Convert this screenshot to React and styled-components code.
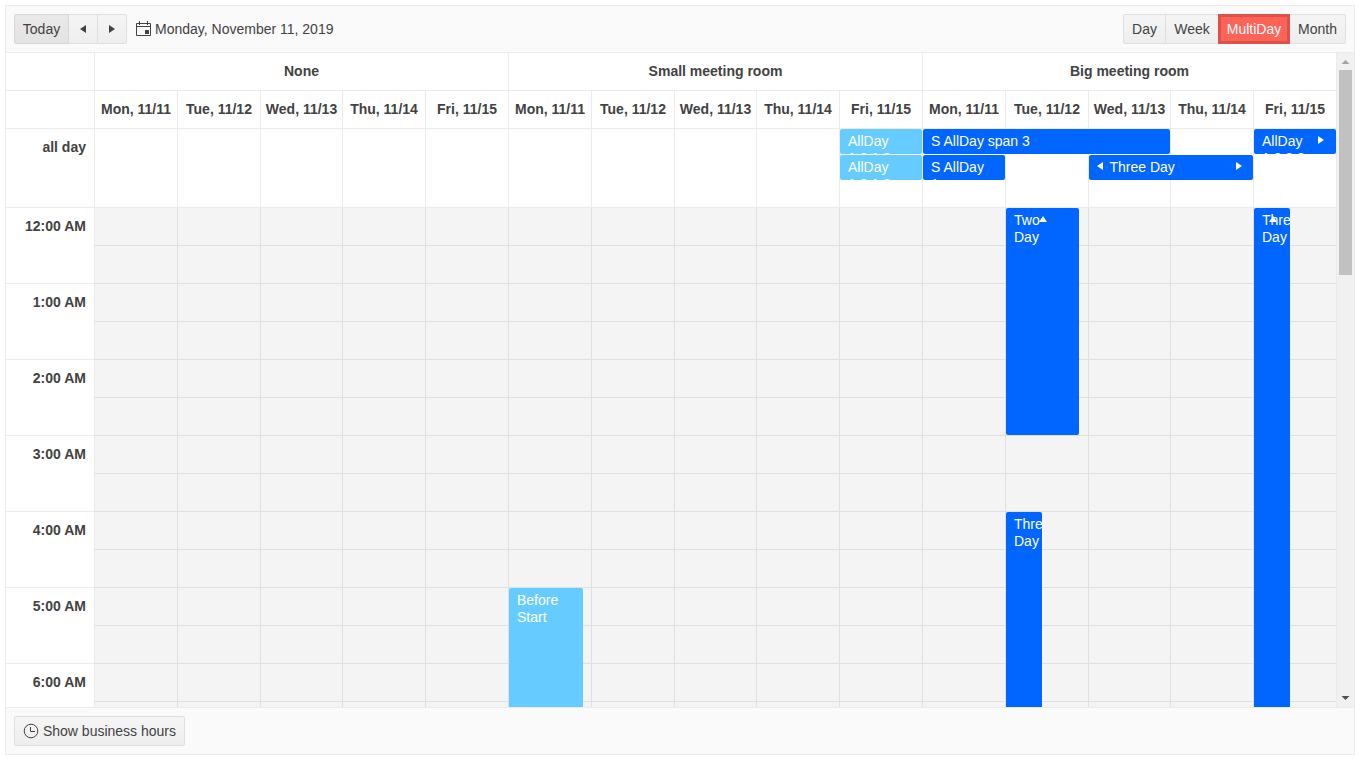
import React from "react";
import styled, { createGlobalStyle, css } from "styled-components";

const Global = createGlobalStyle`
  *, *::before, *::after { box-sizing: border-box; }
  body {
    margin: 0;
    background: #fff;
    color: #424242;
    font: 14px/20px "Liberation Sans", Arial, sans-serif;
  }
`;

const LINE = "#ebebeb";
const SLOT_LINE = "#e0e0e0";
const DAY_COLUMNS = "repeat(3, 83px 83px 82px 83px 83px)";

const Scheduler = styled.div`
  display: flex;
  flex-direction: column;
  width: 1350px;
  height: 750px;
  margin: 5px;
  border: 1px solid ${LINE};
`;

const Toolbar = styled.header`
  display: flex;
  align-items: center;
  height: 47px;
  flex: none;
  padding: 0 8px;
  background: #fafafa;
  border-bottom: 1px solid ${LINE};
`;

const Footer = styled.footer`
  display: flex;
  align-items: center;
  height: 47px;
  flex: none;
  padding: 0 8px;
  background: #fafafa;
  border-top: 1px solid ${LINE};
`;

const ButtonGroup = styled.div`
  display: flex;
`;

const Button = styled.button`
  display: flex;
  align-items: center;
  justify-content: center;
  width: ${(p) => p.$width}px;
  height: 30px;
  padding: 0;
  border: 1px solid #dfdfdf;
  background: linear-gradient(#f5f5f5, #eeeeee);
  color: #424242;
  font: inherit;
  white-space: nowrap;
  & + & { margin-left: -1px; }
  &:first-child { border-radius: 2px 0 0 2px; }
  &:last-child { border-radius: 0 2px 2px 0; }
  &:only-child { border-radius: 2px; }
  ${(p) => p.$pressed && css`
    background: linear-gradient(#e9e9e9, #e3e3e3);
    border-color: #d6d6d6;
    z-index: 1;
  `}
  ${(p) => p.$selected && css`
    background: #ff6358;
    border: 3px solid #d9534a;
    color: #fff;
    z-index: 1;
  `}
`;

const CurrentDate = styled.div`
  display: flex;
  align-items: center;
  gap: 4px;
  margin: 0 auto 0 9px;
`;

const Viewport = styled.div`
  display: flex;
  flex: 1;
  min-height: 0;
`;

const Table = styled.div`
  display: flex;
  flex-direction: column;
  width: 1330px;
  overflow: hidden;
`;

const Row = styled.div`
  display: flex;
  flex: none;
  height: ${(p) => p.$height}px;
`;

const TimeCell = styled.div`
  flex: none;
  width: 88px;
  height: ${(p) => p.$height}px;
  padding: 8px;
  border-bottom: 1px solid ${LINE};
  text-align: right;
  font-weight: 700;
`;

const Days = styled.div`
  display: grid;
  grid-template-columns: ${DAY_COLUMNS};
  grid-auto-rows: ${(p) => p.$rowHeight}px;
  position: relative;
`;

const HeaderCell = styled.div`
  grid-column: span ${(p) => p.$span || 1};
  padding-top: 8px;
  border-left: 1px solid ${LINE};
  border-bottom: 1px solid ${LINE};
  text-align: center;
  font-weight: 700;
  white-space: nowrap;
`;

const SlotCell = styled.div`
  background: #f4f4f4;
  border-left: 1px solid ${SLOT_LINE};
  border-bottom: 1px solid ${SLOT_LINE};
  &:nth-child(15n + 1) { border-left-color: ${LINE}; }
`;

const EventLayer = styled.div`
  position: absolute;
  inset: 0;
`;

const Event = styled.div`
  position: absolute;
  left: ${(p) => p.$left}px;
  top: ${(p) => p.$top}px;
  width: ${(p) => p.$width}px;
  height: ${(p) => p.$height}px;
  padding: 4px 8px;
  padding-left: ${(p) => (p.$indent ? 20.5 : 8)}px;
  overflow: hidden;
  border-radius: 2px;
  background: ${(p) => (p.$light ? "#66ccff" : "#0066ff")};
  color: #fff;
  line-height: 17px;
  white-space: pre-line;
`;

const Marker = styled.svg`
  position: absolute;
  left: ${(p) => p.$x}px;
  top: ${(p) => p.$y}px;
  fill: currentColor;
`;

const Scrollbar = styled.div`
  display: flex;
  flex-direction: column;
  align-items: center;
  width: 18px;
  background: #f1f1f1;
  border-left: 1px solid ${LINE};
`;

const ScrollArrow = styled.svg`
  display: block;
  flex: none;
  fill: ${(p) => (p.$active ? "#505050" : "#a3a3a3")};
`;

const ScrollTrack = styled.div`
  flex: 1;
  width: 13px;
`;

const ScrollThumb = styled.div`
  height: 205px;
  background: #c1c1c1;
`;

const ROOMS = ["None", "Small meeting room", "Big meeting room"];
const DATES = ["Mon, 11/11", "Tue, 11/12", "Wed, 11/13", "Thu, 11/14", "Fri, 11/15"];
const HOURS = ["12:00 AM", "1:00 AM", "2:00 AM", "3:00 AM", "4:00 AM", "5:00 AM", "6:00 AM"];
const SHAPES = {
  left: "M6 0v8L0 4z",
  right: "M0 0v8l6-4z",
  up: "M0 6h8L4 0z",
};

const ALL_DAY = [
  { text: "AllDay\n1.2.1.2", x: 746, y: 0, w: 82, light: true },
  { text: "AllDay\n1.2.1.2", x: 746, y: 26, w: 82, light: true },
  { text: "S AllDay span 3", x: 829, y: 0, w: 247 },
  { text: "S AllDay\n1", x: 829, y: 26, w: 82 },
  { text: "Three Day", x: 995, y: 26, w: 164, indent: true, marks: [["left", 7.5, 7], ["right", 146.5, 7]] },
  { text: "AllDay\n1.2.3.3", x: 1160, y: 0, w: 82, marks: [["right", 64, 7]] },
];

const TIMED = [
  { text: "Two\nDay", x: 912, y: 0, w: 73, h: 227, marks: [["up", 33, 8]] },
  { text: "Three Day", x: 912, y: 304, w: 36, h: 228 },
  { text: "Three Day", x: 1160, y: 0, w: 36, h: 532, marks: [["up", 15, 8]] },
  { text: "Before Start", x: 415, y: 380, w: 74, h: 152, light: true },
];

function EventItem({ item, height }) {
  return (
    <Event
      $left={item.x}
      $top={item.y}
      $width={item.w}
      $height={height || item.h}
      $light={item.light}
      $indent={item.indent}
    >
      {item.text}
      {(item.marks || []).map(([dir, x, y]) => (
        <Marker key={dir} $x={x} $y={y} width="8" height="8" viewBox="0 0 8 8">
          <path d={SHAPES[dir]} />
        </Marker>
      ))}
    </Event>
  );
}

function CalendarIcon() {
  return (
    <svg width="15" height="16" viewBox="0 0 15 16" fill="none" stroke="#424242">
      <path d="M.5 2.5h14v12H.5zM0 5.5h15M3.5 0v4M11.5 0v4" />
      <path d="M9 9h4v4H9z" fill="#424242" stroke="none" />
    </svg>
  );
}

function ClockIcon() {
  return (
    <svg width="16" height="16" viewBox="0 0 16 16" fill="none" stroke="#424242">
      <circle cx="8" cy="8" r="6.8" />
      <path d="M7.5 4v4.5H12" />
    </svg>
  );
}

const ButtonLabel = styled.span`
  margin-left: 4px;
`;

const ArrowGlyph = styled.svg`
  fill: #424242;
`;

export default function App() {
  return (
    <>
      <Global />
      <Scheduler>
        <Toolbar>
          <ButtonGroup>
            <Button $width={55} $pressed>Today</Button>
            <Button $width={30}>
              <ArrowGlyph width="6" height="8"><path d={SHAPES.left} /></ArrowGlyph>
            </Button>
            <Button $width={30}>
              <ArrowGlyph width="6" height="8"><path d={SHAPES.right} /></ArrowGlyph>
            </Button>
          </ButtonGroup>
          <CurrentDate>
            <CalendarIcon />
            Monday, November 11, 2019
          </CurrentDate>
          <ButtonGroup>
            <Button $width={43}>Day</Button>
            <Button $width={54}>Week</Button>
            <Button $width={72} $selected>MultiDay</Button>
            <Button $width={57}>Month</Button>
          </ButtonGroup>
        </Toolbar>

        <Viewport>
          <Table>
            <Row $height={38}>
              <TimeCell $height={38} />
              <Days $rowHeight={38}>
                {ROOMS.map((room) => (
                  <HeaderCell key={room} $span={5}>{room}</HeaderCell>
                ))}
              </Days>
            </Row>
            <Row $height={38}>
              <TimeCell $height={38} />
              <Days $rowHeight={38}>
                {ROOMS.map((room) =>
                  DATES.map((date) => <HeaderCell key={room + date}>{date}</HeaderCell>)
                )}
              </Days>
            </Row>
            <Row $height={79}>
              <TimeCell $height={79}>all day</TimeCell>
              <Days $rowHeight={79}>
                {ROOMS.map((room) =>
                  DATES.map((date) => <HeaderCell key={room + date} />)
                )}
                <EventLayer>
                  {ALL_DAY.map((item, i) => (
                    <EventItem key={i} item={item} height={25} />
                  ))}
                </EventLayer>
              </Days>
            </Row>
            <Row $height={532}>
              <div>
                {HOURS.map((hour) => (
                  <TimeCell key={hour} $height={76}>{hour}</TimeCell>
                ))}
              </div>
              <Days $rowHeight={38}>
                {Array.from({ length: 14 * 15 }, (_, i) => <SlotCell key={i} />)}
                <EventLayer>
                  {TIMED.map((item, i) => (
                    <EventItem key={i} item={item} />
                  ))}
                </EventLayer>
              </Days>
            </Row>
          </Table>
          <Scrollbar>
            <ScrollArrow width="17" height="17"><path d="M4.5 11h8L8.5 7z" /></ScrollArrow>
            <ScrollTrack><ScrollThumb /></ScrollTrack>
            <ScrollArrow $active width="17" height="17"><path d="M4.5 6h8L8.5 10z" /></ScrollArrow>
          </Scrollbar>
        </Viewport>

        <Footer>
          <Button $width={171}>
            <ClockIcon />
            <ButtonLabel>Show business hours</ButtonLabel>
          </Button>
        </Footer>
      </Scheduler>
    </>
  );
}
